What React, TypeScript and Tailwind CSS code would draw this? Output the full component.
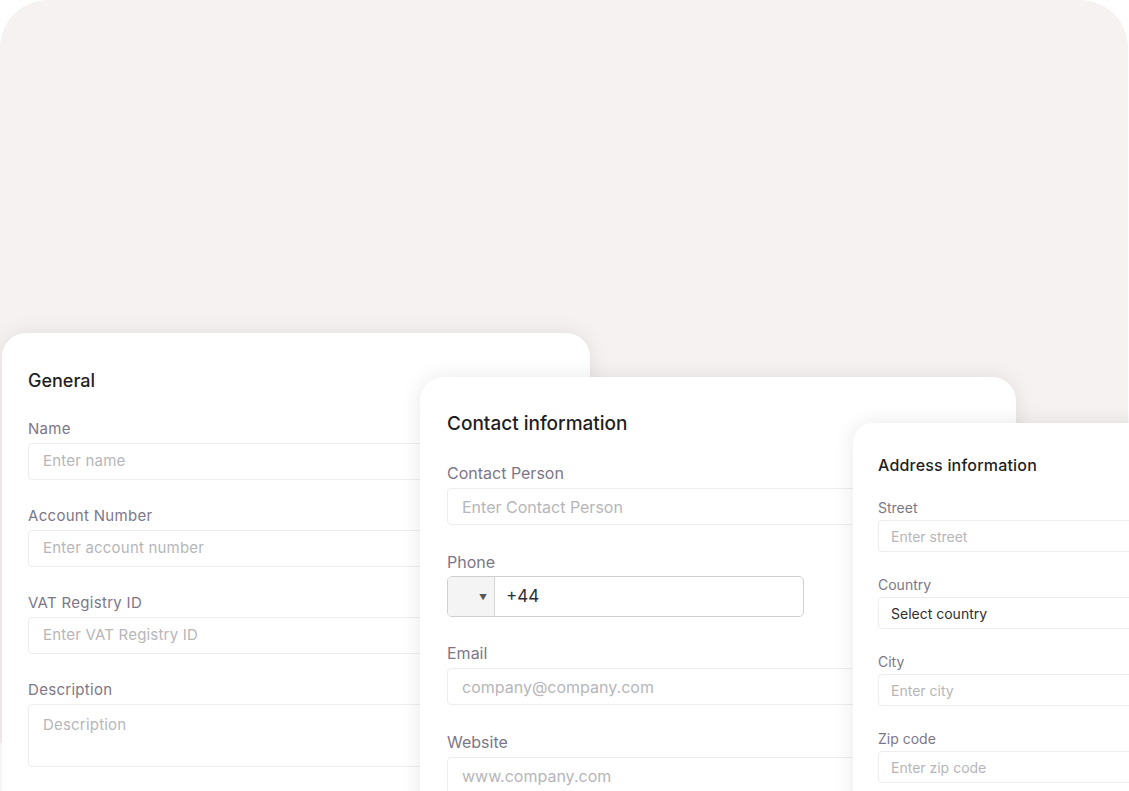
import React from "react";

const font = { fontFamily: "Inter, 'Noto Sans', sans-serif" };

function Field({
  label,
  placeholder,
  labelCls,
  inputCls,
  textCls,
  value,
}: {
  label: string;
  placeholder: string;
  labelCls: string;
  inputCls: string;
  textCls: string;
  value?: boolean;
}) {
  return (
    <div className="flex flex-col">
      <div className={labelCls}>{label}</div>
      <div className={inputCls}>
        <span className={value ? `${textCls} text-[#2e2e33]` : `${textCls} text-[#b6b6ba]`}>{placeholder}</span>
      </div>
    </div>
  );
}

export default function App() {
  const gLabel = "text-[15px] leading-[20px] tracking-[0.3px] text-[#7c7788] h-[20px]";
  const gInput =
    "mt-[4px] h-[37px] w-[534px] rounded-[4px] border border-[#ededed] bg-white flex items-center pl-[14px]";
  const gText = "text-[15px] tracking-[0.2px]";

  const cLabel = "text-[16px] leading-[22px] text-[#7c7788] h-[22px]";
  const cInput =
    "mt-[4px] h-[37px] w-[542px] rounded-[4px] border border-[#ededed] bg-white flex items-center pl-[14px]";
  const cText = "text-[16px]";

  const aLabel = "text-[14px] leading-[20px] text-[#7c7788] h-[20px]";
  const aInput =
    "mt-[2px] h-[32px] w-[280px] rounded-[4px] border border-[#ededed] bg-white flex items-center pl-[12px]";
  const aText = "text-[14px]";

  return (
    <div className="relative w-[1129px] h-[791px] overflow-hidden bg-white" style={font}>
      {/* background panel */}
      <div className="absolute left-0 top-0 w-[1128px] h-[743px] rounded-t-[48px] bg-[#f6f2f1]" />

      {/* General card */}
      <div className="absolute left-[2px] top-[333px] w-[588px] h-[520px] rounded-t-[24px] bg-white shadow-[0_0_22px_rgba(0,0,0,0.09)] pl-[26px] pt-[36px]">
        <div className="text-[18px] leading-[24px] font-medium text-[#1f1f22]">General</div>
        <div className="mt-[26px] flex flex-col gap-[26px]">
          <Field label="Name" placeholder="Enter name" labelCls={gLabel} inputCls={gInput} textCls={gText} />
          <Field label="Account Number" placeholder="Enter account number" labelCls={gLabel} inputCls={gInput} textCls={gText} />
          <Field label="VAT Registry ID" placeholder="Enter VAT Registry ID" labelCls={gLabel} inputCls={gInput} textCls={gText} />
          <div className="flex flex-col">
            <div className={gLabel}>Description</div>
            <div className="mt-[4px] h-[63px] w-[534px] rounded-[4px] border border-[#ededed] bg-white pl-[14px] pt-[7px]">
              <span className="text-[15px] tracking-[0.2px] text-[#b6b6ba]">Description</span>
            </div>
          </div>
        </div>
      </div>

      {/* Contact card */}
      <div className="absolute left-[420px] top-[377px] w-[596px] h-[480px] rounded-t-[24px] bg-white shadow-[0_0_22px_rgba(0,0,0,0.09)] pl-[27px] pt-[35px]">
        <div className="text-[19px] leading-[24px] font-medium text-[#1f1f22]">Contact information</div>
        <div className="mt-[26px] flex flex-col gap-[26px]">
          <Field label="Contact Person" placeholder="Enter Contact Person" labelCls={cLabel} inputCls={cInput} textCls={cText} />
          <div className="flex flex-col">
            <div className={cLabel}>Phone</div>
            <div className="mt-[3px] h-[41px] w-[357px] rounded-[5px] border border-[#cfcfd2] bg-white flex overflow-hidden">
              <div className="w-[47px] h-full bg-[#f4f4f5] border-r border-[#d6d6d8] flex items-center justify-end pr-[7px]">
                <span className="text-[8px] text-[#555]">▼</span>
              </div>
              <div className="flex items-center pl-[11px] text-[17px] text-[#2e2e33]">+44</div>
            </div>
          </div>
          <div className="-mt-[1px]">
            <Field label="Email" placeholder="company@company.com" labelCls={cLabel} inputCls={cInput} textCls={cText} />
          </div>
          <Field label="Website" placeholder="www.company.com" labelCls={cLabel} inputCls={cInput} textCls={cText} />
        </div>
      </div>

      {/* Address card */}
      <div className="absolute left-[853px] top-[423px] w-[320px] h-[420px] rounded-t-[20px] bg-white shadow-[0_0_22px_rgba(0,0,0,0.09)] pl-[25px] pt-[31px]">
        <div className="text-[16px] leading-[22px] font-medium tracking-[0.2px] text-[#1f1f22]">Address information</div>
        <div className="mt-[22px] flex flex-col gap-[23px]">
          <Field label="Street" placeholder="Enter street" labelCls={aLabel} inputCls={aInput} textCls={aText} />
          <Field label="Country" placeholder="Select country" labelCls={aLabel} inputCls={aInput} textCls={aText} value />
          <Field label="City" placeholder="Enter city" labelCls={aLabel} inputCls={aInput} textCls={aText} />
          <Field label="Zip code" placeholder="Enter zip code" labelCls={aLabel} inputCls={aInput} textCls={aText} />
        </div>
      </div>
    </div>
  );
}
